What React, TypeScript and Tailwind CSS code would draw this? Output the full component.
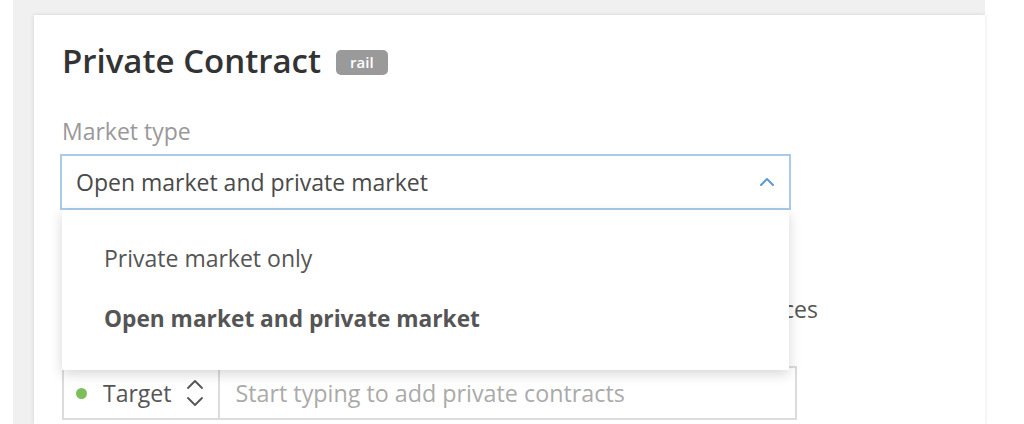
import React from "react";

const font = { fontFamily: "'Open Sans', Lato, sans-serif" };

function ChevronUp({ className }: { className?: string }) {
  return (
    <svg viewBox="0 0 16 10" className={className} fill="none">
      <polyline points="2,8 8,2 14,8" stroke="currentColor" strokeWidth="2" strokeLinecap="round" strokeLinejoin="round" />
    </svg>
  );
}

function UpDown() {
  return (
    <svg viewBox="0 0 20 32" className="w-[20px] h-[32px] text-[#555]" fill="none">
      <polyline points="3,11 10,4 17,11" stroke="currentColor" strokeWidth="1.8" strokeLinecap="round" strokeLinejoin="round" />
      <polyline points="3,21 10,28 17,21" stroke="currentColor" strokeWidth="1.8" strokeLinecap="round" strokeLinejoin="round" />
    </svg>
  );
}

export default function App() {
  return (
    <div className="w-[1024px] h-[424px] bg-white overflow-hidden" style={font}>
      <div className="ml-[13px] w-[972px] h-full bg-[#f0f0f0] pt-[15px] pl-[21px]">
        <div className="bg-white h-full shadow-[0_0_4px_rgba(0,0,0,0.12)] pl-[28px] pt-[26px]">
          <div className="flex items-center gap-[15px]">
            <h1 className="text-[33px] leading-[40px] font-semibold text-[#333]">Private Contract</h1>
            <span className="bg-[#9a9a9a] text-white text-[15px] font-semibold leading-[25px] px-[14px] rounded-[5px] mt-[2px]">rail</span>
          </div>

          <div className="mt-[36px] text-[23px] leading-[28px] text-[#999]">Market type</div>

          <div className="relative mt-[9px] -ml-[2px] w-[731px] h-[56px] border-2 border-[#a9cbe9] flex items-center justify-between pl-[14px] pr-[14px]">
            <span className="text-[23px] text-[#4a4a4a]">Open market and private market</span>
            <ChevronUp className="w-[16px] h-[10px] text-[#5b9bd5]" />
            <div className="absolute left-0 right-0 top-[calc(100%+2px)] h-[160px] bg-white shadow-[0_4px_12px_rgba(0,0,0,0.16)] z-10 flex flex-col pl-[42px] pt-[34px] gap-[33px]">
              <div className="text-[23px] leading-[28px] text-[#555]">Private market only</div>
              <div className="text-[22.7px] leading-[28px] text-[#555] font-bold">Open market and private market</div>
            </div>
          </div>

          <div className="mt-[33px] h-[18px] w-[20px] border-2 border-[#7fb0de] rounded-[3px]" />

          <div className="mt-[34px] w-[756px] whitespace-nowrap text-right text-[23px] leading-[28px] text-[#555]">
            Apply to all marketplaces
          </div>

          <div className="mt-[43px] w-[735px] h-[54px] border-2 border-[#dcdcdc] flex items-center">
            <div className="flex items-center h-full pl-[12px] pr-[13px] border-r-2 border-[#dcdcdc]">
              <span className="w-[11px] h-[11px] rounded-full bg-[#7cbf5a]" />
              <span className="ml-[16px] text-[23px] text-[#555]">Target</span>
              <span className="ml-[14px]"><UpDown /></span>
            </div>
            <span className="ml-[15px] text-[23.3px] text-[#aaa]">Start typing to add private contracts</span>
          </div>
        </div>
      </div>
    </div>
  );
}
